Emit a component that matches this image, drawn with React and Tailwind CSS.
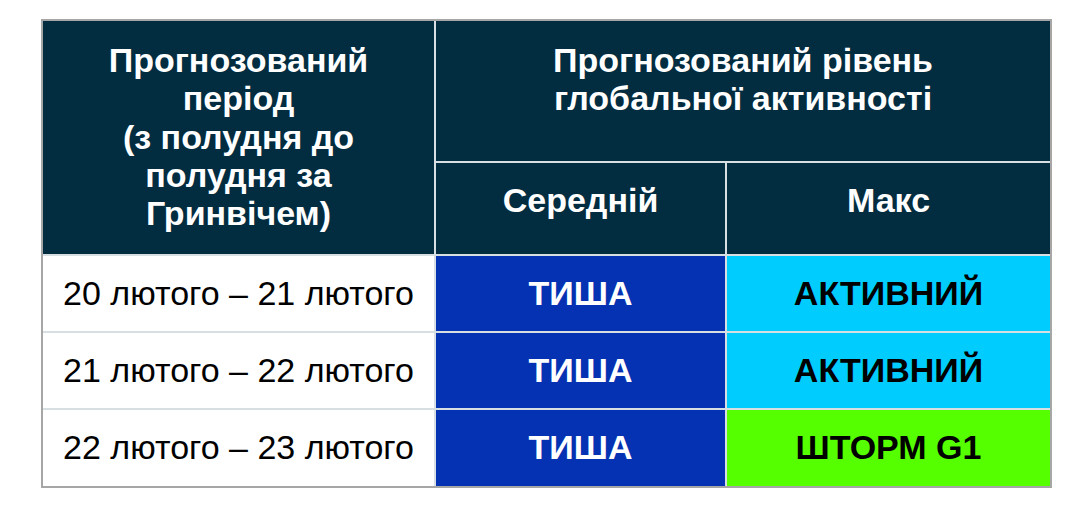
import React from "react";

const rows = [
  { period: "20 лютого – 21 лютого", avg: "ТИША", max: "АКТИВНИЙ", maxBg: "bg-[#00ccfd]" },
  { period: "21 лютого – 22 лютого", avg: "ТИША", max: "АКТИВНИЙ", maxBg: "bg-[#00ccfd]" },
  { period: "22 лютого – 23 лютого", avg: "ТИША", max: "ШТОРМ G1", maxBg: "bg-[#55ff00]" },
];

export default function App() {
  return (
    <div className="min-h-[505px] w-[1078px] bg-white pl-[41px] pt-[19px] font-['Liberation_Sans',Arial,sans-serif]">
      <div className="w-[1011px] border-2 border-[#a6a6a6]">
        <div className="grid grid-cols-[391px_289px_323px] grid-rows-[140px_91px_75px_75px_76px] gap-[2px] bg-[#d8dfe3]">
          {/* header */}
          <div className="row-span-2 bg-[#022c40] pt-[20px] text-center text-[34px] font-bold leading-[38.3px] text-white">
            Прогнозований
            <br />
            період
            <br />
            (з полудня до
            <br />
            полудня за
            <br />
            Гринвічем)
          </div>
          <div className="col-span-2 bg-[#022c40] pt-[20px] text-center text-[34px] font-bold leading-[38.3px] text-white">
            Прогнозований рівень
            <br />
            глобальної активності
          </div>
          <div className="bg-[#022c40] pt-[18px] text-center text-[34px] font-bold leading-[38px] text-white">
            Середній
          </div>
          <div className="bg-[#022c40] pt-[18px] text-center text-[34px] font-bold leading-[38px] text-white">
            Макс
          </div>

          {/* data */}
          {rows.map((r) => (
            <React.Fragment key={r.period}>
              <div className="flex items-center justify-center bg-white pb-[2px] text-[34px] leading-[38px] text-black">
                {r.period}
              </div>
              <div className="flex items-center justify-center bg-[#0532b2] pb-[2px] text-[34px] font-bold leading-[38px] text-white">
                {r.avg}
              </div>
              <div className={`flex items-center justify-center ${r.maxBg} pb-[2px] text-[34px] font-bold leading-[38px] text-black`}>
                {r.max}
              </div>
            </React.Fragment>
          ))}
        </div>
      </div>
    </div>
  );
}
